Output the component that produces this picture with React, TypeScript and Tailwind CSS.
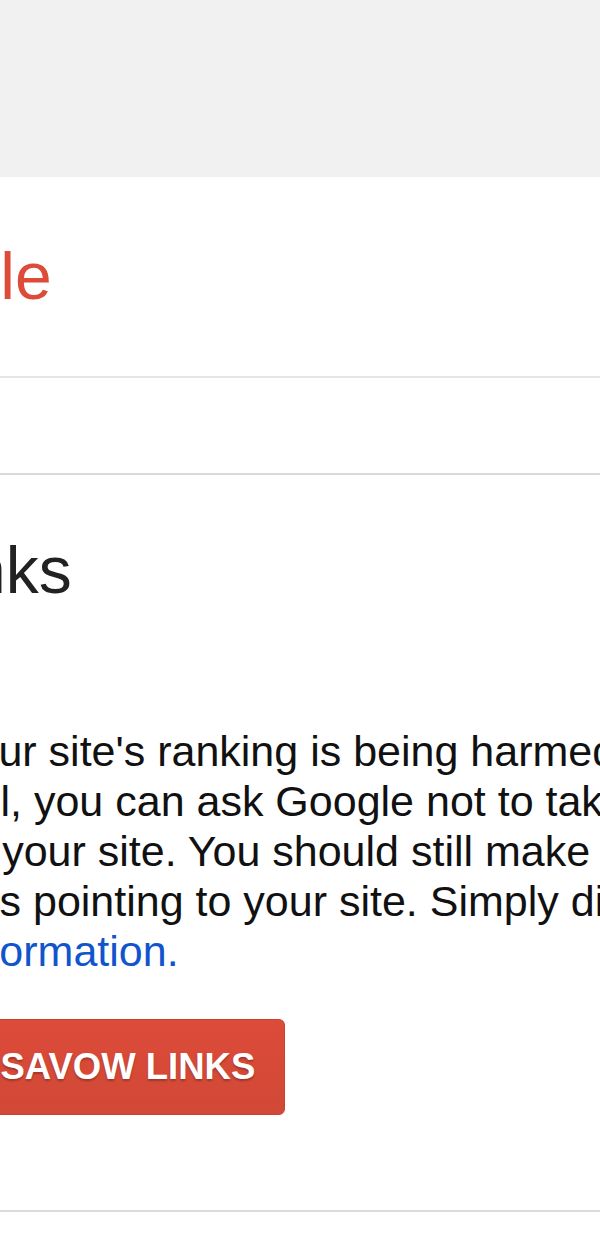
export default function App() {
  return (
    <div className="min-h-screen w-full overflow-hidden bg-white font-['Liberation_Sans',Arial,sans-serif]">
      <div className="h-[177px] bg-[#f1f1f1]" />

      <header className="pt-[66px] pb-[67px] border-b-2 border-[#e5e5e5]">
        <div className="ml-[-418px] whitespace-nowrap text-[66px] leading-none text-[#dd4b39]">
          Search Console
        </div>
      </header>

      <div className="h-[97px] border-b-2 border-[#dadada]" />

      <section className="pt-[62px] pb-[95px] border-b-2 border-[#dadada]">
        <h1 className="ml-[-328px] whitespace-nowrap text-[66px] leading-none font-normal text-[#222]">
          Disavow links
        </h1>

        <div className="mt-[123px] whitespace-nowrap text-[43px] leading-[50px] text-[#111]">
          <div className="ml-[-47px]">your site's ranking is being harmed by low-quality links you do not</div>
          <div className="ml-[-119px]">control, you can ask Google not to take them into account when</div>
          <div className="ml-[-201px]">assessing your site. You should still make every effort to clean up</div>
          <div className="ml-[-65px]">links pointing to your site. Simply disavowing them isn't enough.</div>
          <div className="ml-[-156px]">
            <a href="#" className="text-[#1155cc]">More information.</a>
          </div>
        </div>

        <button
          type="button"
          className="mt-[43px] ml-[-66px] flex h-[96px] items-center rounded-[6px] border border-[#c9412f] bg-linear-to-b from-[#dd4b39] to-[#d14836] px-[29px] whitespace-nowrap text-[36.5px] font-bold text-white [text-shadow:0_2px_2px_rgba(0,0,0,0.25)]"
        >
          DISAVOW LINKS
        </button>
      </section>
    </div>
  );
}
